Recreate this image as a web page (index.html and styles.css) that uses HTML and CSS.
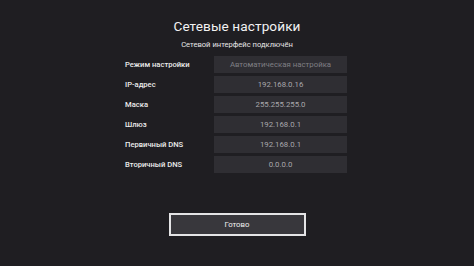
FILE: index.html
```html
<!DOCTYPE html>
<html lang="ru">
<head>
<meta charset="utf-8">
<link rel="stylesheet" href="styles.css">
</head>
<body>
<main class="screen">
  <h1 class="title">Сетевые настройки</h1>
  <p class="subtitle">Сетевой интерфейс подключён</p>
  <div class="rows">
    <div class="row"><span class="label">Режим настройки</span><span class="value dim">Автоматическая настройка</span></div>
    <div class="row"><span class="label">IP-адрес</span><span class="value">192.168.0.16</span></div>
    <div class="row"><span class="label">Маска</span><span class="value">255.255.255.0</span></div>
    <div class="row"><span class="label">Шлюз</span><span class="value">192.168.0.1</span></div>
    <div class="row"><span class="label">Первичный DNS</span><span class="value">192.168.0.1</span></div>
    <div class="row"><span class="label">Вторичный DNS</span><span class="value">0.0.0.0</span></div>
  </div>
  <button class="done">Готово</button>
</main>
</body>
</html>
```
FILE: styles.css
```css
html, body {
  margin: 0;
  padding: 0;
  background: #1f1e22;
  width: 474px;
  height: 266px;
  overflow: hidden;
}
.screen {
  display: flex;
  flex-direction: column;
  align-items: center;
  font-family: "Roboto", "Noto Sans", sans-serif;
  color: #f2f2f2;
}
.title {
  margin: 16px 0 0;
  font-size: 13.6px;
  font-weight: 400;
  line-height: 20px;
  letter-spacing: 0.1px;
}
.subtitle {
  margin: 4px 0 0;
  font-size: 7.6px;
  line-height: 10px;
  color: #e6e6e6;
}
.rows {
  margin-top: 6px;
  display: flex;
  flex-direction: column;
  gap: 3px;
}
.row {
  display: flex;
  align-items: center;
  width: 222px;
  height: 17px;
  margin-right: 2px;
}
.label {
  width: 89px;
  font-size: 7.6px;
  font-weight: 500;
  color: #ececec;
}
.value {
  width: 133px;
  height: 17px;
  background: #2f2e33;
  display: flex;
  align-items: center;
  justify-content: center;
  font-size: 7.8px;
  color: #a9a8ac;
}
.value.dim {
  color: #7f7e83;
}
.done {
  margin-top: 40px;
  width: 137px;
  height: 23px;
  background: #38373c;
  border: 2px solid #e4e4e6;
  color: #f0f0f0;
  font-family: "Roboto", "Noto Sans", sans-serif;
  font-size: 7.8px;
  padding: 0;
}
```
